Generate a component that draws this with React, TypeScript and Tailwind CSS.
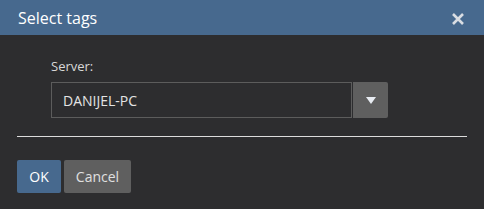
import React from 'react';

export default function App() {
  return (
    <div
      className="w-[484px] h-[209px] bg-[#2d2d2f] flex flex-col"
      style={{ fontFamily: '"Open Sans", sans-serif' }}
    >
      {/* Header */}
      <div className="h-[35px] bg-[#47698e] flex items-center justify-between pl-[18px] pr-[20px]">
        <span className="text-[16px] text-white leading-none">Select tags</span>
        <svg width="12" height="12" viewBox="0 0 12 12" className="mt-[3px]">
          <path d="M1 1 L11 11 M11 1 L1 11" stroke="#d9dde3" strokeWidth="2.6" />
        </svg>
      </div>

      {/* Body */}
      <div className="px-[17px]">
        <div className="pl-[34px] pt-[22px]">
          <div className="text-[13px] text-[#d8d8d8] leading-[18px]">Server:</div>
          <div className="mt-[7px] flex h-[36px] w-[337px] gap-px">
            <div className="w-[301px] border border-[#5c5c5c] flex items-center pl-[11px] text-[14px] text-[#e4e4e4]">
              DANIJEL-PC
            </div>
            <div className="flex-1 bg-[#5f5f5f] rounded-r-[2px] flex items-center justify-center">
              <svg width="10" height="7" viewBox="0 0 10 7">
                <path d="M0 0 H10 L5 7 Z" fill="#e8ecf2" />
              </svg>
            </div>
          </div>
        </div>

        <div className="mt-[18px] h-px bg-[#dcdcdc]" />

        <div className="mt-[23px] flex gap-[3px]">
          <button className="h-[33px] w-[44px] bg-[#47698e] rounded-[2px] text-[14px] text-white">OK</button>
          <button className="h-[33px] w-[67px] bg-[#5f5f5f] rounded-[2px] text-[14px] text-[#e0e0e0]">Cancel</button>
        </div>
      </div>
    </div>
  );
}
